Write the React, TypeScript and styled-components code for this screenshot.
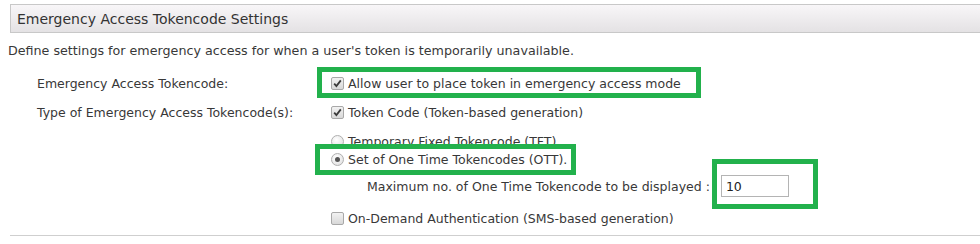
import React from "react";
import styled, { createGlobalStyle } from "styled-components";

const Global = createGlobalStyle`
  html, body { margin: 0; padding: 0; background: #ffffff; }
  body { font-family: "DejaVu Sans", Verdana, sans-serif; color: #383838; }
`;

const Page = styled.div`
  position: relative;
  width: 980px;
  height: 244px;
  overflow: hidden;
`;

const HeaderBar = styled.div`
  margin: 4px 0 0 10px;
  height: 27px;
  display: flex;
  align-items: center;
  padding-left: 6px;
  border: 1px solid #c8c8c8;
  border-right: none;
  background: linear-gradient(#f8f6f8, #e4e2e4);
  font-size: 14px;
  color: #333;
`;

const Description = styled.div`
  margin: 10px 0 0 8px;
  font-size: 12.7px;
  line-height: 15px;
`;

const Form = styled.div`
  display: flex;
  flex-direction: column;
  margin: 16px 0 0 37px;
  font-size: 12.5px;
`;

const Row = styled.div<{ $mt?: number }>`
  display: flex;
  align-items: center;
  height: 18px;
  margin-top: ${(p) => p.$mt ?? 0}px;
`;

const Label = styled.div`
  width: 294px;
  flex: none;
`;

const Control = styled.div<{ $indent?: number }>`
  display: flex;
  align-items: center;
  gap: 4px;
  padding-left: ${(p) => p.$indent ?? 0}px;
`;

const Box = styled.span`
  width: 11px;
  height: 11px;
  border: 1px solid #a8a8a8;
  border-radius: 2px;
  background: linear-gradient(#f2f2f2, #d8d8d8);
  display: inline-flex;
  align-items: center;
  justify-content: center;
  flex: none;
`;

const Radio = styled.span<{ $checked?: boolean }>`
  width: 11px;
  height: 11px;
  border: 1px solid #b0b0b0;
  border-radius: 50%;
  background: radial-gradient(circle at 40% 35%, #ffffff, #dcdcdc);
  display: inline-flex;
  align-items: center;
  justify-content: center;
  flex: none;
  &::after {
    content: "";
    display: ${(p) => (p.$checked ? "block" : "none")};
    width: 5px;
    height: 5px;
    border-radius: 50%;
    background: #555;
  }
`;

const TextInput = styled.div`
  width: 62px;
  height: 20px;
  border: 1px solid #b4b4b4;
  margin-left: 7px;
  display: flex;
  align-items: center;
  padding-left: 4px;
  font-size: 12.5px;
  color: #222;
`;

const Rule = styled.div`
  position: absolute;
  left: 10px;
  right: 0;
  top: 235px;
  height: 1px;
  background: #cfcfcf;
`;

const Highlight = styled.div<{ $x: number; $y: number; $w: number; $h: number }>`
  position: absolute;
  left: ${(p) => p.$x}px;
  top: ${(p) => p.$y}px;
  width: ${(p) => p.$w}px;
  height: ${(p) => p.$h}px;
  box-sizing: border-box;
  border: 5px solid #22b14c;
  pointer-events: none;
`;

const Mark = () => (
  <svg width="9" height="9" viewBox="0 0 9 9">
    <path d="M1.2 4.6 L3.4 7 L7.8 1.4" fill="none" stroke="#3a3a3a" strokeWidth="1.8" />
  </svg>
);

export default function App() {
  return (
    <Page>
      <Global />
      <HeaderBar>Emergency Access Tokencode Settings</HeaderBar>
      <Description>
        Define settings for emergency access for when a user's token is temporarily unavailable.
      </Description>
      <Form>
        <Row>
          <Label>Emergency Access Tokencode:</Label>
          <Control>
            <Box><Mark /></Box>
            Allow user to place token in emergency access mode
          </Control>
        </Row>
        <Row $mt={11}>
          <Label>Type of Emergency Access Tokencode(s):</Label>
          <Control>
            <Box><Mark /></Box>
            Token Code (Token-based generation)
          </Control>
        </Row>
        <Row $mt={11}>
          <Label />
          <Control>
            <Radio />
            Temporary Fixed Tokencode (TFT)
          </Control>
        </Row>
        <Row>
          <Label />
          <Control>
            <Radio $checked />
            Set of One Time Tokencodes (OTT).
          </Control>
        </Row>
        <Row $mt={9}>
          <Label />
          <Control $indent={36}>
            Maximum no. of One Time Tokencode to be displayed :
            <TextInput>10</TextInput>
          </Control>
        </Row>
        <Row $mt={14}>
          <Label />
          <Control>
            <Box />
            On-Demand Authentication (SMS-based generation)
          </Control>
        </Row>
      </Form>
      <Rule />
      <Highlight $x={317} $y={67} $w={384} $h={31} />
      <Highlight $x={315} $y={144} $w={261} $h={31} />
      <Highlight $x={712} $y={159} $w={106} $h={50} />
    </Page>
  );
}
